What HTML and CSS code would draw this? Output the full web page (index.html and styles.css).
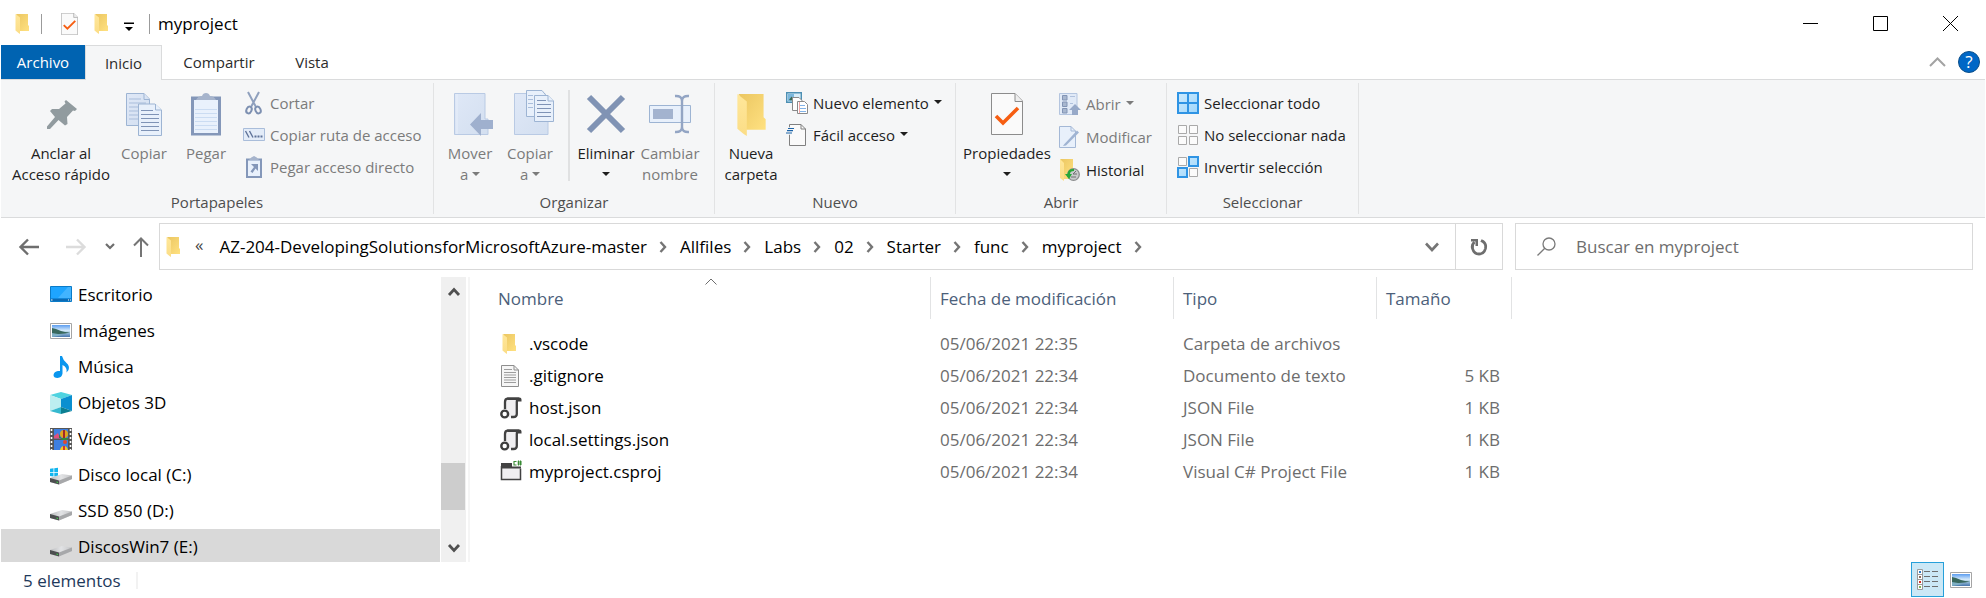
FILE: index.html
```html
<!DOCTYPE html>
<html lang="es">
<head>
<meta charset="utf-8">
<title>myproject</title>
<link rel="stylesheet" href="styles.css">
</head>
<body>
<svg class="defs" aria-hidden="true">
  <defs>
    <linearGradient id="g-folder" x1="0" y1="0" x2="1" y2="1">
      <stop offset="0" stop-color="#ebc661"/><stop offset="1" stop-color="#ffe181"/>
    </linearGradient>
    <linearGradient id="g-flap" x1="0" y1="0" x2="0" y2="1">
      <stop offset="0" stop-color="#ffe79a"/><stop offset="1" stop-color="#fbdd86"/>
    </linearGradient>
    <linearGradient id="g-page" x1="0" y1="0" x2="1" y2="1">
      <stop offset="0" stop-color="#dfe8f7"/><stop offset="1" stop-color="#d3dff0"/>
    </linearGradient>
    <linearGradient id="g-sky" x1="0" y1="0" x2="0" y2="1">
      <stop offset="0" stop-color="#5c9df0"/><stop offset=".45" stop-color="#d3e9fb"/><stop offset=".6" stop-color="#a9cbe0"/><stop offset="1" stop-color="#4675ad"/>
    </linearGradient>
    <linearGradient id="g-drive" x1="0" y1="0" x2="1" y2="0">
      <stop offset="0" stop-color="#b9babc"/><stop offset=".5" stop-color="#e2e3e5"/><stop offset="1" stop-color="#c4c5c7"/>
    </linearGradient>
    <linearGradient id="g-sel" x1="0" y1="0" x2="1" y2="1">
      <stop offset="0" stop-color="#cdeafd"/><stop offset="1" stop-color="#9fd6fb"/>
    </linearGradient>
  </defs>
  <symbol id="folder" viewBox="0 0 28 42">
    <path d="M2 2H26V24L28 26V36H9V14Z" fill="url(#g-folder)"/>
    <path d="M1 2L10 9V42L7 40 1 35Z" fill="url(#g-flap)"/>
  </symbol>
  <symbol id="checkdoc" viewBox="0 0 32 42">
    <path d="M.5.5H24L31.500 8V41.500H.5Z" fill="#fafafa" stroke="#8c8c8c"/>
    <path d="M24 .5V8.500H31.500" fill="#eee" stroke="#8c8c8c"/>
    <path d="M5 23L12 30 27 15" fill="none" stroke="#f65e12" stroke-width="3.600"/>
  </symbol>
  <symbol id="picture" viewBox="0 0 22 16">
    <path d="M.5.5H21.500V15.500H.5Z" fill="#fff" stroke="#a5a5a5"/>
    <path d="M2 2H20V14H2Z" fill="url(#g-sky)"/>
    <path d="M2 5L6 6 11 8 15 9 20 9.500 15 10.500 9 11 2 12Z" fill="#38685d"/>
    <path d="M2 10L8 11 13 12 8 13 2 14Z" fill="#7fb0c4"/>
  </symbol>
  <symbol id="drive" viewBox="0 0 22 16">
    <path d="M0 9L12 5 22 6.500V10L9 15.500 0 13Z" fill="url(#g-drive)"/>
    <path d="M0 9L9 11.500V15.500L0 13Z" fill="#4d4f50"/>
    <path d="M9 11.500L22 6.500V10L9 15.500Z" fill="#a7a8aa"/>
    <path d="M6.500 12.500L8 13V14L6.500 13.600Z" fill="#3fdc4a"/>
  </symbol>
  <symbol id="json" viewBox="0 0 22 22">
    <path d="M6 3H17V18Q16.500 20.500 13 20.500H9L6 15Z" fill="#f0eff1"/>
    <path d="M5 12V5Q5 1.700 8 1.700H19Q16.800 2.500 16.800 5V17Q16.800 20 13.500 20H11" fill="none" stroke="#424242" stroke-width="2.300"/>
    <path d="M7 .5H19.500Q21.500 .7 21.500 2.500V4.500H17V3H8Z" fill="#424242"/>
    <circle cx="4.700" cy="17" r="3.400" fill="#fff" stroke="#3d3d3d" stroke-width="2.400"/>
  </symbol>
  <symbol id="chev" viewBox="0 0 8 12">
    <path d="M1.500 1L6 6 1.500 11" fill="none" stroke="#757575" stroke-width="2.400"/>
  </symbol>
  <symbol id="caret" viewBox="0 0 8 4"><path d="M0 0H8L4 4Z" fill="currentColor"/></symbol>
</svg>

<div class="window">
  <header class="titlebar">
    <svg class="i-folder" width="14" height="21"><use href="#folder"/></svg>
    <span class="tick"></span>
    <button class="bare qa-doc" aria-label="Propiedades"><svg width="17" height="22"><use href="#checkdoc"/></svg></button>
    <button class="bare qa-folder" aria-label="Nueva carpeta"><svg width="14" height="21"><use href="#folder"/></svg></button>
    <button class="bare qa-more" aria-label="Personalizar"><svg width="10" height="10" viewBox="0 0 10 10"><path d="M0 .5H10V2H0ZM1 5H9L5 9Z"/></svg></button>
    <span class="tick"></span>
    <h1 class="title">myproject</h1>
    <div class="winbtns">
      <button class="winbtn" aria-label="Minimizar"><svg width="15" height="15"><path d="M0 7.500H15" stroke="#000"/></svg></button>
      <button class="winbtn" aria-label="Maximizar"><svg width="15" height="15"><path d="M.5.5H14.500V14.500H.5Z" fill="none" stroke="#000"/></svg></button>
      <button class="winbtn" aria-label="Cerrar"><svg width="15" height="15"><path d="M0 0L15 15M15 0L0 15" stroke="#000"/></svg></button>
    </div>
  </header>

  <nav class="tabs">
    <button class="tab tab-file">Archivo</button>
    <button class="tab tab-on">Inicio</button>
    <button class="tab tab-share">Compartir</button>
    <button class="tab tab-view">Vista</button>
    <div class="tabs-end">
      <button class="bare" aria-label="Minimizar la cinta"><svg width="17" height="10"><path d="M1 9L8.500 1.500 16 9" fill="none" stroke="#a3a3a3" stroke-width="2"/></svg></button>
      <button class="help" aria-label="Ayuda">?</button>
    </div>
  </nav>

  <section class="ribbon">
    <div class="group">
      <div class="tools g1">
        <button class="big w106"><svg width="44" height="44" viewBox="0 0 44 44"><path d="M27 8L38 17 36 19 34 18.500 28 25 28.500 32 26 33.500 19.500 28 11 37H8V34.500L16 25 11 19 13 17 20 17 26.500 11.500 25.500 9.500Z" fill="#919b9f"/></svg><span>Anclar al<br>Acceso rápido</span></button>
        <button class="big w60 off"><svg width="44" height="44" viewBox="0 0 44 44">
          <g fill="url(#g-page)" stroke="#9db4d3"><path d="M4.500 1.500H22L27.500 7V33.500H4.500Z"/><path d="M22 1.500V7.500H27.500"/></g>
          <path d="M7 7H19M7 11H24M7 15H16M7 19H16M7 23H16M7 27H16" stroke="#a9bddb"/>
          <g fill="#e8f0fb" stroke="#9db4d3"><path d="M16.500 12H33L39.500 18V43.500H16.500Z"/><path d="M33.500 12V18H39.500"/></g>
          <path d="M19 18.500H31M19 22.500H37M19 26.500H37M19 30.500H37M19 34.500H37M19 38.500H37" stroke="#7f93b6"/></svg><span>Copiar</span></button>
        <button class="big w64 off"><svg width="44" height="44" viewBox="0 0 44 44"><path d="M7 4.500H37V43.500H7Z" fill="#8497b9"/><path d="M10 8H34V41H10Z" fill="#e9f1fc"/><path d="M11 17.500H33M11 21.500H33M11 25.500H33M11 29.500H33M11 33.500H33M11 37.500H33" stroke="#cbdcf2"/><path d="M12 8Q14 4 18 4Q19 1 22 1T26 4Q30 4 32 8Z" fill="#a6b4cc"/></svg><span>Pegar</span></button>
        <div class="stack">
          <button class="small off"><svg width="22" height="22" viewBox="0 0 22 22"><path d="M5 0L13 15M16 0L8 15" stroke="#8fa0bd" stroke-width="2"/><g fill="none" stroke="#7d90b1" stroke-width="2"><ellipse cx="6" cy="18" rx="2.500" ry="3.500" transform="rotate(25 6 18)"/><ellipse cx="15" cy="18" rx="2.500" ry="3.500" transform="rotate(-25 15 18)"/></g></svg><span>Cortar</span></button>
          <button class="small off"><svg width="22" height="22" viewBox="0 0 22 22"><path d="M.5 4.500H21.500V16.500H.5Z" fill="#e3ecf8" stroke="#a9bdda"/><path d="M2.500 7L6 13.500M6.500 7L10 13.500" stroke="#5f7399" stroke-width="1.400"/><path d="M11.500 12.500H13.500M14.500 12.500H16.500M17.500 12.500H19.500" stroke="#5f7399" stroke-width="2"/></svg><span>Copiar ruta de acceso</span></button>
          <button class="small off"><svg width="22" height="22" viewBox="0 0 22 22"><path d="M4 3.500H18V21H4Z" fill="#e9f1fc" stroke="#8497b9" stroke-width="2"/><path d="M6 4Q8 1 11 0Q14 1 16 4Z" fill="#a6b4cc"/><path d="M8 8H15V15L12.500 12.500 9.500 17 7.500 15.500 11 11Z" fill="#8497b9"/></svg><span>Pegar acceso directo</span></button>
        </div>
      </div>
      <div class="caption">Portapapeles</div>
    </div>

    <div class="group">
      <div class="tools g2">
        <button class="big w60 off"><svg width="44" height="44" viewBox="0 0 44 44"><path d="M6.500 1.500H37V27H40V42.500H6.500Z" fill="url(#g-page)" stroke="#b9cae4"/><path d="M9 2V42" stroke="#e8effa"/><path d="M22 32.500L33 21V28H45V37H33V44Z" fill="#9fb0ce"/></svg><span>Mover<br>a <svg class="caret" width="8" height="4"><use href="#caret"/></svg></span></button>
        <button class="big w60 off"><svg width="44" height="44" viewBox="0 0 44 44"><path d="M6.500 1.500H37V27H40V42.500H6.500Z" fill="url(#g-page)" stroke="#b9cae4"/><g fill="#e8f0fb" stroke="#9db4d3"><path d="M18.500-1.500H34L38.500 4V24.500H18.500Z"/><path d="M26.500 3.500H40L45.500 9V29.500H26.500Z"/><path d="M40 3.500V9H45.500"/></g><path d="M20 3.500H25M20 7.500H25M20 11.500H25M20 15.500H25" stroke="#a9bddb"/><path d="M29 8.500H38M29 12.500H43M29 16.500H43M29 20.500H43M29 24.500H43" stroke="#7f93b6"/></svg><span>Copiar<br>a <svg class="caret" width="8" height="4"><use href="#caret"/></svg></span></button>
        <span class="vline"></span>
        <button class="big w64"><svg width="44" height="44" viewBox="0 0 44 44"><path d="M5 5L39 39M39 5L5 39" stroke="#8093b4" stroke-width="6"/></svg><span>Eliminar<br><svg class="caret" width="8" height="4"><use href="#caret"/></svg></span></button>
        <button class="big w64 off"><svg width="44" height="44" viewBox="0 0 44 44"><path d="M1.500 13.500H42.500V30.500H1.500Z" fill="#e8f0fb" stroke="#9db4d3"/><path d="M5 17H25V27H5Z" fill="#a3b3cf"/><path d="M27 4Q34 3.500 34 9V35Q34 40.500 27 40M41 4Q34 3.500 34 9M34 35Q34 40.500 41 40" fill="none" stroke="#93a5c4" stroke-width="2.400"/></svg><span>Cambiar<br>nombre</span></button>
      </div>
      <div class="caption">Organizar</div>
    </div>

    <div class="group">
      <div class="tools g3">
        <button class="big w60"><svg width="30" height="44"><use href="#folder"/></svg><span>Nueva<br>carpeta</span></button>
        <div class="stack">
          <button class="small"><svg width="22" height="22" viewBox="0 0 22 22"><path d="M.7.7H15.300V10.300H.7Z" fill="#d7edf8" stroke="#4d8fb3" stroke-width="1.400"/><path d="M2 2H8V5L5 9H2Z" fill="#7bb7dc"/><path d="M3 8L5.500 4.500 9 9Z" fill="#376b55"/><path d="M6.500 5.500H13L16 8.500V18.500H6.500Z" fill="#fff" stroke="#8a8a8a"/><path d="M11.500 9.500H18.500L21.500 12.500V21.500H11.500Z" fill="#fff" stroke="#8a8a8a"/><path d="M14 13.500H19M14 16.500H20M14 19.500H20" stroke="#82b3e8"/><path d="M13.500 10V21" stroke="#f1a5a5"/></svg><span>Nuevo elemento</span><svg class="caret" width="8" height="4"><use href="#caret"/></svg></button>
          <button class="small"><svg width="22" height="22" viewBox="0 0 22 22"><path d="M3.500.5H15L19.500 5V21.500H3.500Z" fill="#fafafa" stroke="#808080"/><path d="M15 .5V5H19.500" fill="none" stroke="#808080"/><path d="M3 4.500H9M1 7H7M-1 9.500H6" stroke="#f5f6f7" stroke-width="2.500"/><path d="M2 4.500H8M1 6.700H7M0 9H6" stroke="#1d64a8" stroke-width="1.200"/></svg><span>Fácil acceso</span><svg class="caret" width="8" height="4"><use href="#caret"/></svg></button>
        </div>
      </div>
      <div class="caption">Nuevo</div>
    </div>

    <div class="group">
      <div class="tools g4">
        <button class="big w94"><svg width="32" height="44"><use href="#checkdoc"/></svg><span>Propiedades<br><svg class="caret" width="8" height="4"><use href="#caret"/></svg></span></button>
        <div class="stack r33">
          <button class="small off"><svg width="22" height="22" viewBox="0 0 22 22"><path d="M.5.5H18V21.500H.5Z" fill="#e1eaf7" stroke="#b4c5df"/><path d="M3.500 2.500H8V7H3.500ZM3.500 9H8V13.500H3.500ZM3.500 15.500H8V20H3.500Z" fill="#a8b7cf" stroke="#8294b5"/><path d="M11 3.500H16M11 10.500H14" stroke="#b0c1dc"/><path d="M16 11L22 17H19V22H13V17H10Z" fill="#97a9c8"/></svg><span>Abrir</span><svg class="caret" width="8" height="4"><use href="#caret"/></svg></button>
          <button class="small off"><svg width="22" height="22" viewBox="0 0 22 22"><path d="M.5.5H12L16.500 5V21.500H.5Z" fill="#e8f0fb" stroke="#a4b8d6"/><path d="M12 .5V5H16.500" fill="none" stroke="#a4b8d6"/><path d="M5 18.500L18 4.500 20 6.500 7 19.500 4 20Z" fill="#9fb3d2"/></svg><span>Modificar</span></button>
          <button class="small"><svg width="22" height="22" viewBox="0 0 22 22"><path d="M1 0H14V20H4V6Z" fill="url(#g-folder)"/><path d="M1 0L5 4V22L1 19Z" fill="url(#g-flap)"/><circle cx="14.500" cy="15.500" r="5.800" fill="#c9cbcc" stroke="#8b8d8e" stroke-width="1.300"/><path d="M14 15L17 12M14 15H18M12 18H17" stroke="#6d6f70"/><path d="M15 10Q9 9.500 8.500 15H6L10 20 13 15H11Q11 12 15 12Z" fill="#27a838"/></svg><span>Historial</span></button>
        </div>
      </div>
      <div class="caption">Abrir</div>
    </div>

    <div class="group">
      <div class="tools g5">
        <div class="stack">
          <button class="small"><svg width="22" height="22" viewBox="0 0 22 22"><path d="M1 1H21V21H1ZM11 1V21M1 11H21" fill="url(#g-sel)" stroke="#2f94e4" stroke-width="2"/></svg><span>Seleccionar todo</span></button>
          <button class="small"><svg width="22" height="22" viewBox="0 0 22 22"><path d="M1.500 1.500H9.500V9.500H1.500ZM12.500 1.500H20.500V9.500H12.500ZM1.500 12.500H9.500V20.500H1.500ZM12.500 12.500H20.500V20.500H12.500Z" fill="#fbfbfb" stroke="#a9a9a9"/></svg><span>No seleccionar nada</span></button>
          <button class="small"><svg width="22" height="22" viewBox="0 0 22 22"><path d="M1.500 1.500H9.500V9.500H1.500ZM12.500 12.500H20.500V20.500H12.500Z" fill="#fbfbfb" stroke="#a9a9a9"/><path d="M12 1H21V10H12ZM1 12H10V21H1Z" fill="url(#g-sel)" stroke="#2f94e4" stroke-width="2"/></svg><span>Invertir selección</span></button>
        </div>
      </div>
      <div class="caption">Seleccionar</div>
    </div>
  </section>

  <section class="navbar">
    <div class="navbtns">
      <button class="bare" aria-label="Atrás"><svg width="20" height="18"><path d="M20 9H2M9 1.500L1.500 9 9 16.500" fill="none" stroke="#6e6e6e" stroke-width="2.400"/></svg></button>
      <button class="bare nb-fwd" aria-label="Adelante"><svg width="20" height="18"><path d="M0 9H18M11 1.500L18.500 9 11 16.500" fill="none" stroke="#dcdcdc" stroke-width="2.400"/></svg></button>
      <button class="bare nb-hist" aria-label="Recientes"><svg width="10" height="7"><path d="M1 1L5 5 9 1" fill="none" stroke="#6e6e6e" stroke-width="2.200"/></svg></button>
      <button class="bare nb-up" aria-label="Arriba"><svg width="16" height="20"><path d="M8 20V2M1 8.500L8 1.500 15 8.500" fill="none" stroke="#757575" stroke-width="2"/></svg></button>
    </div>
    <div class="address">
      <svg class="i-folder" width="14" height="21"><use href="#folder"/></svg>
      <span class="guil">«</span>
      <ol class="crumbs">
        <li><a href="#">AZ-204-DevelopingSolutionsforMicrosoftAzure-master</a><svg width="8" height="12"><use href="#chev"/></svg></li>
        <li><a href="#">Allfiles</a><svg width="8" height="12"><use href="#chev"/></svg></li>
        <li><a href="#">Labs</a><svg width="8" height="12"><use href="#chev"/></svg></li>
        <li><a href="#">02</a><svg width="8" height="12"><use href="#chev"/></svg></li>
        <li><a href="#">Starter</a><svg width="8" height="12"><use href="#chev"/></svg></li>
        <li><a href="#">func</a><svg width="8" height="12"><use href="#chev"/></svg></li>
        <li><a href="#">myproject</a><svg width="8" height="12"><use href="#chev"/></svg></li>
      </ol>
      <button class="bare addr-drop" aria-label="Ubicaciones anteriores"><svg width="14" height="10"><path d="M1 1.500L7 8 13 1.500" fill="none" stroke="#757575" stroke-width="2.600"/></svg></button>
      <button class="bare addr-refresh" aria-label="Actualizar"><svg width="18" height="18" viewBox="0 0 18 18"><path d="M4.500 4Q1.500 6.500 2.500 10.500 4 16 9 16T15.500 10.500Q16.500 6 13 3.500L11 2.500" fill="none" stroke="#6e6e6e" stroke-width="2.800"/><path d="M1 1H8V8H5.500V3.500H1Z" fill="#6e6e6e"/></svg></button>
    </div>
    <label class="search">
      <svg width="19" height="19"><circle cx="12" cy="7" r="6" fill="none" stroke="#7a7a7a" stroke-width="1.300"/><path d="M7.800 11.200L.5 18.500" stroke="#7a7a7a" stroke-width="1.300"/></svg>
      <input type="text" placeholder="Buscar en myproject" aria-label="Buscar en myproject">
    </label>
  </section>

  <main class="content">
    <aside class="tree">
      <ul class="places">
        <li><svg width="22" height="22" viewBox="0 0 22 22"><path d="M.5 2.500H21.500V17.500H.5Z" fill="#1ea5ff" stroke="#0a7bc8"/><path d="M8 14L18 3H21V14Z" fill="#42b4ff"/><path d="M1 14.500H21V17H1Z" fill="#0b6bb5"/><path d="M1 16H2.500M18 16H19M20 16H21" stroke="#fff"/></svg>Escritorio</li>
        <li><svg width="22" height="16"><use href="#picture"/></svg>Imágenes</li>
        <li><svg width="22" height="22" viewBox="0 0 22 22"><path d="M10 0H12Q13 4 16.500 7 20 10 18.500 14L16.500 16.500Q17.500 11 12.500 9V17.500Q12 21.500 7.500 22 3.500 22 3.500 19 4 15.500 8 15H10Z" fill="#0a96ee"/></svg>Música</li>
        <li><svg width="22" height="22" viewBox="0 0 22 22"><path d="M11 0L22 3 11 7 0 3Z" fill="#4fd3e0"/><path d="M0 3L11 7V15L0 19Z" fill="#bdeef0"/><path d="M22 3L11 7V15L22 19Z" fill="#0a8fd0"/><path d="M0 19L11 15V22Z" fill="#36b9cf"/><path d="M22 19L11 15V22Z" fill="#0c7f92"/></svg>Objetos 3D</li>
        <li><svg width="22" height="22" viewBox="0 0 22 22"><path d="M0 0H22V22H0Z" fill="#565656"/><path d="M1.500 1V22M20.500 1V22" stroke="#fff" stroke-width="1.600" stroke-dasharray="2 2"/><path d="M4 1H18V10.500H4ZM4 12H18V22H4Z" fill="#3e7fe0"/><path d="M4 8L8 5 10 10.500H4Z" fill="#e0507c"/><circle cx="14" cy="6" r="4" fill="#e2a51c"/><path d="M13 2H15V10H13Z" fill="#a2262c"/><path d="M9 6V10H18L17 12H12Z" fill="#35863d"/><circle cx="15" cy="14" r="2" fill="#e24a2c"/><path d="M10 22Q11 18 14 18T18 22Z" fill="#f2ca23"/><path d="M13 18H15V22H13Z" fill="#d6362e"/></svg>Vídeos</li>
        <li><svg width="22" height="22" viewBox="0 0 22 22"><path d="M0 4.800L3.500 4.300V8H0ZM4.300 4.200L8 3.700V8H4.300ZM0 8.800H3.500V12.500L0 12ZM4.300 8.800H8V13L4.300 12.600Z" fill="#12b5ee"/><use href="#drive" y="5" width="22" height="16"/></svg>Disco local (C:)</li>
        <li><svg width="22" height="22"><use href="#drive" y="5" width="22" height="16"/></svg>SSD 850 (D:)</li>
        <li class="sel"><svg width="22" height="22"><use href="#drive" y="5" width="22" height="16"/></svg>DiscosWin7 (E:)</li>
      </ul>
      <div class="scroll">
        <svg width="12" height="9"><path d="M1 8L6 2.500 11 8" fill="none" stroke="#505050" stroke-width="2.800"/></svg>
        <div class="track"><div class="thumb"></div></div>
        <svg width="12" height="9"><path d="M1 1L6 6.500 11 1" fill="none" stroke="#505050" stroke-width="2.800"/></svg>
      </div>
    </aside>
    <div class="files">
      <table class="list">
        <colgroup><col class="c1"><col class="c2"><col class="c3"><col class="c4"><col></colgroup>
        <thead><tr>
          <th class="sorted">Nombre<svg class="sort" width="12" height="7"><path d="M.5 6.500L6 1 11.500 6.500" fill="none" stroke="#6d6d6d"/></svg></th>
          <th>Fecha de modificación</th><th>Tipo</th><th>Tamaño</th><td></td>
        </tr></thead>
        <tbody>
          <tr><td class="name"><span><svg width="22" height="22"><use href="#folder" x="2" width="14" height="21"/></svg>.vscode</span></td><td>05/06/2021 22:35</td><td>Carpeta de archivos</td><td class="size"></td><td></td></tr>
          <tr><td class="name"><span><svg width="22" height="22" viewBox="0 0 22 22"><path d="M1.500.5H14L18.500 5V21.500H1.500Z" fill="#f6f6f6" stroke="#8e8e8e"/><path d="M14 .5V5H18.500" fill="none" stroke="#8e8e8e"/><path d="M4 4.500H12M4 7.500H16M4 10H16M4 12.500H16M4 15H16M4 17.500H16" stroke="#9d9d9d"/></svg>.gitignore</span></td><td>05/06/2021 22:34</td><td>Documento de texto</td><td class="size">5 KB</td><td></td></tr>
          <tr><td class="name"><span><svg width="22" height="22"><use href="#json"/></svg>host.json</span></td><td>05/06/2021 22:34</td><td>JSON File</td><td class="size">1 KB</td><td></td></tr>
          <tr><td class="name"><span><svg width="22" height="22"><use href="#json"/></svg>local.settings.json</span></td><td>05/06/2021 22:34</td><td>JSON File</td><td class="size">1 KB</td><td></td></tr>
          <tr><td class="name"><span><svg width="22" height="22" viewBox="0 0 22 22"><path d="M1.500 5V18.500H20.500V7.500" fill="#f0eff1" stroke="#424242" stroke-width="1.500"/><path d="M1 2H12V5.500H21V7.500H1Z" fill="#424242"/><path d="M16.500 .5H14V4H16.500M18.500-.5V4.500M20.500-.5V4.500M17.500 1H22M17.500 3H22" fill="none" stroke="#388a34" stroke-width="1.100"/></svg>myproject.csproj</span></td><td>05/06/2021 22:34</td><td>Visual C# Project File</td><td class="size">1 KB</td><td></td></tr>
        </tbody>
      </table>
    </div>
  </main>

  <footer class="status">
    <span class="count">5 elementos</span>
    <div class="views">
      <button class="view view-on" aria-label="Detalles"><svg width="22" height="22" viewBox="0 0 22 22"><path d="M.5.5H5.500V20.500H.5ZM.5 5.500H5.500M.5 10.500H5.500M.5 15.500H5.500" fill="#fff" stroke="#9a9a9a"/><path d="M2 3H4" stroke="#2b78c5" stroke-width="2"/><path d="M2 8H4" stroke="#8a6a5c" stroke-width="2"/><path d="M2 13H4" stroke="#d22f24" stroke-width="2"/><path d="M2 18H4" stroke="#7fb254" stroke-width="2"/><path d="M7 2.500H13M15 2.500H21M7 7.500H13M15 7.500H21M7 12.500H13M15 12.500H21M7 17.500H13M15 17.500H21" stroke="#6e6e6e"/></svg></button>
      <button class="view" aria-label="Iconos grandes"><svg width="22" height="16"><use href="#picture"/></svg></button>
    </div>
  </footer>
</div>
</body>
</html>
```

FILE: styles.css
```css
* { box-sizing: border-box; }

body {
  margin: 0;
  background: #fff;
  color: #000;
  font: 17px/22px "Open Sans", "Noto Sans", sans-serif;
}

button, input { font: inherit; color: inherit; }
button { margin: 0; padding: 0; border: 0; background: none; }
svg { display: block; flex: none; overflow: visible; }
ul, ol { margin: 0; padding: 0; list-style: none; }
.defs { position: absolute; width: 0; height: 0; }
.bare { display: flex; align-items: center; justify-content: center; }

.window {
  display: flex;
  flex-direction: column;
  height: 100vh;
  padding: 0 1px;
}

/* Title bar */
.titlebar { display: flex; align-items: center; height: 45px; flex: none; padding: 2px 0 0 14px; }
.tick { width: 1px; height: 20px; margin-left: 12px; background: #9b9b9b; }
.qa-doc { margin-left: 19px; }
.qa-folder { margin-left: 16px; }
.qa-more { margin: 6px 3px 0 16px; }
.title { margin: 0 0 0 8px; font-size: 17px; font-weight: 400; }
.winbtns { display: flex; margin-left: auto; }
.winbtn { display: flex; align-items: center; justify-content: center; width: 70px; height: 43px; }

/* Ribbon tabs */
.tabs { display: flex; flex: none; height: 35px; border-bottom: 1px solid #dadbdc; font-size: 15px; color: #2b2b2b; }
.tab { height: 34px; }
.tab-file { width: 84px; background: #0063b1; color: #fff; }
.tab-on { width: 77px; height: 35px; border: 1px solid #dadbdc; border-bottom: 0; background: #f5f6f7; }
.tab-share { width: 114px; }
.tab-view { width: 72px; }
.tabs-end { display: flex; align-items: center; gap: 12px; margin-left: auto; padding-right: 5px; }
.help { width: 22px; height: 22px; border: 1px solid #0b4f8a; border-radius: 50%; background: #0067c6; color: #fff; font-size: 17px; line-height: 20px; }

/* Ribbon */
.ribbon { display: flex; flex: none; padding: 3px 0; background: #f5f6f7; border-bottom: 1px solid #dadbdc; font-size: 15px; color: #1e1e1e; }
.group { border-right: 1px solid #e2e3e4; }
.tools { display: flex; height: 108px; }
.caption { color: #4e4e4e; text-align: center; line-height: 23px; }
.g1 { padding-left: 7px; width: 432px; }
.g2 { padding-left: 6px; width: 280px; }
.g3 { padding-left: 6px; width: 240px; }
.g4 { padding-left: 4px; width: 210px; }
.g5 { padding-left: 5px; width: 191px; }
.big { display: flex; flex-direction: column; align-items: center; gap: 7px; padding-top: 9px; line-height: 21px; white-space: nowrap; }
.big .caret { display: inline-block; vertical-align: middle; margin-bottom: 4px; }
.off { color: #7b7b7b; }
.w60 { width: 60px; }
.w64 { width: 64px; }
.w94 { width: 94px; }
.w106 { width: 106px; }
.vline { width: 2px; height: 91px; margin: 7px 4px 0 8px; background: #e0e1e2; }
.stack { padding: 4px 0 0 5px; }
.small { display: flex; align-items: center; gap: 5px; height: 32px; white-space: nowrap; }
.small .caret { margin-bottom: 2px; }
.r33 .small { height: 33px; }

/* Address row */
.navbar { display: flex; flex: none; align-items: center; gap: 12px; padding: 5px 12px 7px 18px; }
.navbtns { display: flex; align-items: center; width: 128px; }
.nb-fwd { margin-left: 27px; }
.nb-hist { margin-left: 19px; }
.nb-up { margin-left: 18px; }
.address { display: flex; flex: 1; align-items: center; height: 47px; border: 1px solid #d9d9d9; padding-left: 6px; }
.guil { margin: 0 16px 4px 15px; color: #444; }
.crumbs { display: flex; }
.crumbs li { display: flex; align-items: center; }
.crumbs svg { margin: 0 13px 0 12px; }
.crumbs a { color: #000; text-decoration: none; }
.addr-drop { width: 46px; margin-left: auto; }
.addr-refresh { width: 47px; height: 45px; border-left: 1px solid #d9d9d9; }
.search { display: flex; align-items: center; gap: 20px; width: 458px; height: 47px; padding-left: 21px; border: 1px solid #d9d9d9; }
.search input { flex: 1; min-width: 0; padding: 0; border: 0; outline: 0; background: none; }
.search input::placeholder { color: #6d6d6d; opacity: 1; }

/* Tree and list */
.content { display: flex; flex: 1; min-height: 0; }
.tree { display: flex; width: 469px; border-right: 2px solid #f5f5f5; overflow: hidden; }
.places { flex: 1; }
.places li { display: flex; align-items: center; gap: 6px; height: 36px; padding-left: 49px; }
.places .sel { background: #d9d9d9; }
.scroll { display: flex; flex-direction: column; align-items: center; width: 25px; margin: 0 2px 0 1px; padding: 10px 0 9px; background: #f0f0f0; }
.track { flex: 1; width: 100%; padding-top: 167px; }
.thumb { width: 24px; height: 47px; background: #cdcdcd; }
.files { flex: 1; min-width: 0; }
.list { width: 100%; table-layout: fixed; border-collapse: separate; border-spacing: 0; color: #6d6d6d; }
.c1 { width: 461px; }
.c2 { width: 243px; }
.c3 { width: 203px; }
.c4 { width: 135px; }
.list th { position: relative; height: 42px; padding: 2px 0 0 9px; border-right: 1px solid #e2e3e4; color: #4c607a; font-weight: 400; text-align: left; }
.list .sorted { padding-left: 28px; }
.sort { position: absolute; top: 1px; left: 51%; }
.list td { height: 32px; padding: 0 0 0 9px; white-space: nowrap; }
.list tbody::before { content: ""; display: block; height: 9px; }
.list .name { padding-left: 30px; color: #000; }
.name span { display: flex; align-items: center; gap: 7px; }
.list .size { padding: 0 12px 0 0; text-align: right; }

/* Status bar */
.status { display: flex; flex: none; align-items: center; justify-content: space-between; height: 36px; padding: 0 7px 0 22px; color: #1e395b; }
.count { width: 115px; border-right: 2px solid #f2f2f2; line-height: 17px; }
.views { display: flex; height: 36px; padding-bottom: 1px; }
.view { display: flex; align-items: center; justify-content: center; width: 34px; }
.view-on { width: 33px; border: 1px solid #26a0da; background: #cbe8f6; }
```
